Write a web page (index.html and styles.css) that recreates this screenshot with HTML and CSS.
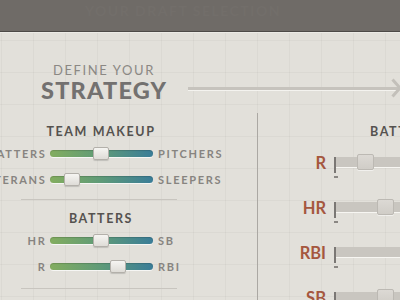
FILE: index.html
```html
<!DOCTYPE html>
<html>
<head>
<meta charset="utf-8">
<link rel="stylesheet" href="styles.css">
</head>
<body>
<header class="topbar"><span class="topbar-title">YOUR DRAFT SELECTION</span></header>
<section class="hero">
  <div class="title">
    <div class="title-small">DEFINE YOUR</div>
    <div class="title-big">STRATEGY</div>
  </div>
  <div class="arrow">
    <div class="arrow-line"></div>
    <svg class="arrow-head" width="10" height="20" viewBox="0 0 10 20"><polyline points="1.5,1.5 9,10 1.5,18.5" fill="none" stroke="#c3c0ba" stroke-width="3"/></svg>
  </div>
</section>
<main class="panels">
  <div class="left">
    <h3 class="heading">TEAM MAKEUP</h3>
    <div class="srow">
      <div class="lab-l"><span>BATTERS</span></div>
      <div class="track"><div class="thumb" style="left:43px"></div></div>
      <div class="lab-r">PITCHERS</div>
    </div>
    <div class="srow">
      <div class="lab-l"><span>VETERANS</span></div>
      <div class="track"><div class="thumb" style="left:14px"></div></div>
      <div class="lab-r">SLEEPERS</div>
    </div>
    <div class="divider"></div>
    <h3 class="heading heading-2">BATTERS</h3>
    <div class="srow">
      <div class="lab-l"><span>HR</span></div>
      <div class="track"><div class="thumb" style="left:43px"></div></div>
      <div class="lab-r">SB</div>
    </div>
    <div class="srow srow-last">
      <div class="lab-l"><span>R</span></div>
      <div class="track"><div class="thumb" style="left:60px"></div></div>
      <div class="lab-r">RBI</div>
    </div>
    <div class="divider divider-2"></div>
  </div>
  <div class="right">
    <h3 class="heading heading-right">BATTERS</h3>
    <div class="rrow">
      <div class="rlab">R</div>
      <div class="rtrack"><div class="rthumb" style="left:23px"></div></div>
    </div>
    <div class="rrow">
      <div class="rlab">HR</div>
      <div class="rtrack"><div class="rthumb" style="left:43px"></div></div>
    </div>
    <div class="rrow">
      <div class="rlab">RBI</div>
      <div class="rtrack"><div class="rthumb" style="left:80px"></div></div>
    </div>
    <div class="rrow">
      <div class="rlab">SB</div>
      <div class="rtrack"><div class="rthumb" style="left:43px"></div></div>
    </div>
  </div>
</main>
</body>
</html>
```

FILE: styles.css
```css
html, body {
  margin: 0;
  padding: 0;
  width: 400px;
  height: 300px;
  overflow: hidden;
}
body {
  font-family: Lato, "Open Sans", sans-serif;
  background-color: #e2e0da;
  background-image:
    linear-gradient(to right, rgba(0,0,0,0.03) 1px, transparent 1px),
    linear-gradient(to bottom, rgba(0,0,0,0.03) 1px, transparent 1px);
  background-size: 32px 32px;
  background-position: 1px 8px;
}
.topbar {
  height: 31px;
  background: #6f6b67;
  border-bottom: 1px solid #4d4a47;
  box-shadow: 0 1px 0 #ecebe6;
  box-sizing: content-box;
  padding-left: 85px;
  display: flex;
  align-items: flex-start;
}
.topbar-title {
  font-size: 14px;
  font-weight: 700;
  letter-spacing: 1.5px;
  color: #726e6a;
  line-height: 22px;
  white-space: nowrap;
}
.hero {
  height: 81px;
  display: flex;
  align-items: flex-start;
  box-sizing: border-box;
  padding-top: 31px;
}
.title {
  margin-left: 41px;
  width: 126px;
  text-align: center;
}
.title-small {
  font-size: 13px;
  font-weight: 400;
  letter-spacing: 1.6px;
  color: #8b8884;
  line-height: 14px;
  white-space: nowrap;
}
.title-big {
  margin-top: 3px;
  font-size: 23.5px;
  font-weight: 900;
  letter-spacing: 1.2px;
  color: #737170;
  line-height: 20px;
  white-space: nowrap;
}
.arrow {
  flex: 1;
  margin-left: 21px;
  margin-right: -1px;
  margin-top: 15px;
  display: flex;
  align-items: center;
}
.arrow-line {
  flex: 1;
  height: 3px;
  background: #c6c3bd;
  border-bottom: 1px solid #f4f3ef;
  margin-top: 1px;
}
.arrow-head {
  display: block;
  margin-left: -8px;
}
.panels {
  display: flex;
  align-items: stretch;
  height: 187px;
}
.left {
  width: 258px;
  flex: none;
  box-sizing: border-box;
  padding-right: 55px;
  border-right: 1px solid #aba8a3;
}
.heading {
  margin: 11px 0 0;
  font-size: 12.5px;
  font-weight: 700;
  letter-spacing: 1.6px;
  color: #55524f;
  line-height: 16px;
  text-align: center;
  white-space: nowrap;
}
.srow {
  display: flex;
  align-items: center;
  height: 26px;
}
.lab-l {
  width: 45px;
  margin-right: 5px;
  display: flex;
  justify-content: flex-end;
  flex: none;
}
.lab-l span, .lab-r {
  font-size: 11px;
  font-weight: 700;
  letter-spacing: 1.7px;
  color: #878480;
  white-space: nowrap;
}
.lab-l span {
  margin-right: -1.5px;
}
.lab-r {
  margin-left: 5px;
}
.track {
  position: relative;
  width: 103px;
  height: 7px;
  flex: none;
  border-radius: 4px;
  background: linear-gradient(to right, #83ad5f, #5e9a78 50%, #3a7d98);
  box-shadow: inset 0 1px 1px rgba(0,0,0,0.15), 0 1px 0 rgba(255,255,255,0.7);
}
.thumb {
  position: absolute;
  top: -3px;
  width: 14px;
  height: 11px;
  border: 1px solid #b3b0aa;
  border-radius: 2px;
  background: linear-gradient(#f6f5f2, #dedcd7);
  box-shadow: 0 1px 1px rgba(0,0,0,0.15);
}
.divider {
  height: 1px;
  background: #c8c5bf;
  margin: 7px 25px 0 21px;
}
.srow-last {
  height: 27px;
}
.divider-2 {
  margin-top: 8px;
}
.right {
  flex: none;
  width: 300px;
}
.heading-right {
  text-align: left;
  padding-left: 112px;
}
.rrow {
  display: flex;
  align-items: center;
  height: 45px;
}
.rlab {
  width: 68px;
  flex: none;
  text-align: right;
  font-size: 16.5px;
  font-weight: 700;
  color: #a5573e;
  margin-right: 8px;
}
.rtrack {
  position: relative;
  flex: 1;
  height: 10px;
  background: #c9c6c0;
  border-bottom: 1.5px solid #f7f6f2;
}
.rtrack::before {
  content: "";
  position: absolute;
  left: 0;
  top: 0;
  width: 2px;
  height: 16px;
  background: #7a7774;
}
.rtrack::after {
  content: "";
  position: absolute;
  left: 0;
  top: 19px;
  width: 4px;
  height: 1.5px;
  background: #8a8783;
}
.rthumb {
  position: absolute;
  top: -3px;
  width: 15px;
  height: 14px;
  border: 1px solid #bcb9b3;
  border-radius: 2px;
  background: linear-gradient(#dcd9d4, #d0cdc7);
  box-shadow: 0 1px 0 rgba(255,255,255,0.5);
}
```
